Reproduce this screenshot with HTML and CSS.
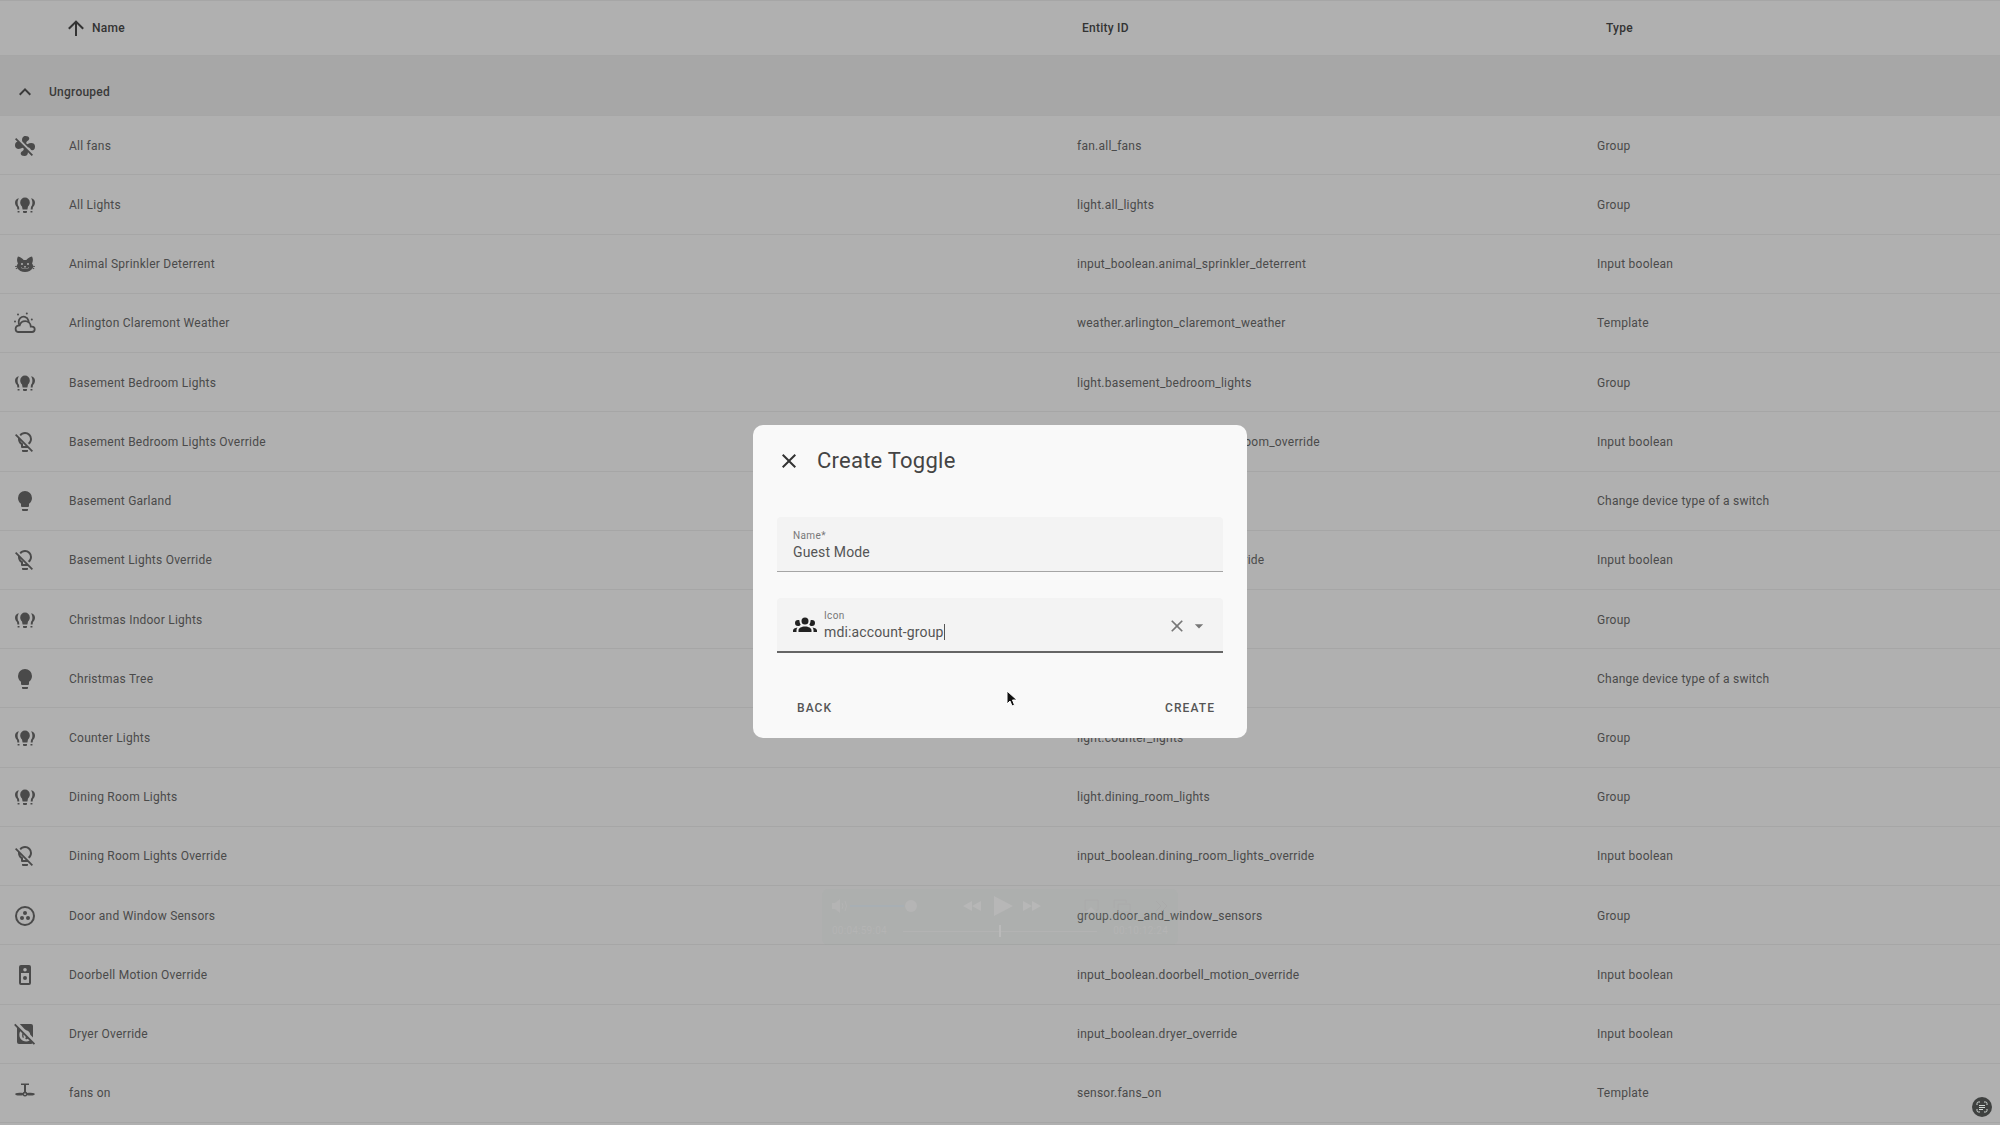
FILE: index.html
```html
<!DOCTYPE html>
<html lang="en">
<head>
<meta charset="utf-8">
<title>Helpers</title>
<link rel="stylesheet" href="styles.css">
</head>
<body>
<svg class="sprite" aria-hidden="true">
  <symbol id="fan-off" viewBox="0 0 24 24"><path d="M12.5,2C9.64,2 8.57,4.55 9.29,7.47L15,13.16C15.87,13.37 16.81,13.81 17.28,14.73C18.46,17.1 22.03,17 22.03,12.5C22.03,8.92 18.05,8.13 14.35,10.13C14.03,9.73 13.61,9.42 13.13,9.22C13.32,8.29 13.76,7.24 14.75,6.75C17.11,5.57 17,2 12.5,2M3.28,4L2,5.27L4.47,7.73C3.22,7.74 2,8.87 2,11.5C2,15.07 5.96,15.85 9.65,13.87C9.97,14.27 10.4,14.59 10.89,14.79C10.69,15.71 10.25,16.75 9.27,17.24C6.91,18.42 7,22 11.5,22C13.8,22 14.94,20.36 14.94,18.21L18.73,22L20,20.72L3.28,4Z"/></symbol>
  <symbol id="bulb-group" viewBox="0 0 24 24"><path d="M12,4.6A4.8,4.8 0 0,0 7.2,9.4C7.2,11.2 8,12.5 9,13.5L9.6,16.6H14.4L15,13.5C16,12.5 16.8,11.2 16.8,9.4A4.8,4.8 0 0,0 12,4.6M10,18V19A1,1 0 0,0 11,20H13A1,1 0 0,0 14,19V18H10M6,5.3C3.5,5.6 2,7.5 2,9.8C2,11.8 3,13 4,14L4.4,16.5H6.3L6,13.8C5,12.8 4.6,11.3 4.6,9.8C4.6,8.2 5,6.8 6,5.3M4.6,18V19.4H6.5V18H4.6M18,5.3C20.5,5.6 22,7.5 22,9.8C22,11.8 21,13 20,14L19.6,16.5H17.7L18,13.8C19,12.8 19.4,11.3 19.4,9.8C19.4,8.2 19,6.8 18,5.3M17.5,18V19.4H19.4V18H17.5Z"/></symbol>
  <symbol id="cat" viewBox="0 0 24 24"><path d="M12,8L10.67,8.09C9.81,7.07 7.4,4.5 5,4.5C5,4.5 3.03,7.46 4.96,11.41C4.41,12.24 4.07,12.67 4,13.66L2.07,13.95L2.28,14.93L4.04,14.67L4.18,15.38L2.61,16.32L3.08,17.21L4.53,16.32C5.68,18.76 8.59,20 12,20C15.41,20 18.32,18.76 19.47,16.32L20.92,17.21L21.39,16.32L19.82,15.38L19.96,14.67L21.72,14.93L21.93,13.95L20,13.66C19.93,12.67 19.59,12.24 19.04,11.41C20.97,7.46 19,4.5 19,4.5C16.6,4.5 14.19,7.07 13.33,8.09L12,8M9,11A1,1 0 0,1 10,12A1,1 0 0,1 9,13A1,1 0 0,1 8,12A1,1 0 0,1 9,11M15,11A1,1 0 0,1 16,12A1,1 0 0,1 15,13A1,1 0 0,1 14,12A1,1 0 0,1 15,11M11,14H13L12.3,15.39C12.5,16.03 13.06,16.5 13.75,16.5A1.5,1.5 0 0,0 15.25,15H15.75A2,2 0 0,1 13.75,17C13,17 12.35,16.59 12,16C11.65,16.59 11,17 10.25,17A2,2 0 0,1 8.25,15H8.75A1.5,1.5 0 0,0 10.25,16.5C10.94,16.5 11.5,16.03 11.7,15.39L11,14Z"/></symbol>
  <symbol id="weather" viewBox="0 0 24 24"><g fill="none" stroke="currentColor" stroke-width="1.8"><path d="M5,21H19A2.7,2.7 0 0,0 19,15.6H17.8C17.6,12.4 15.2,10.2 12.2,10.2C9.6,10.2 7.4,11.8 6.7,14.3C4.3,14.3 2.6,15.8 2.6,17.8C2.6,19.6 3.7,21 5,21Z"/><path d="M6.6,14.3C5.2,12.5 5.4,8.8 7.2,7.1C9.8,4.6 14.4,5.6 15.4,9.4L15.7,11.8"/></g><circle cx="5" cy="3.4" r="1"/><circle cx="13.8" cy="2.6" r="1"/><circle cx="2" cy="10.6" r="1"/><circle cx="18.8" cy="8.6" r="1"/></symbol>
  <symbol id="bulb-off" viewBox="0 0 24 24"><path d="M12,2C9.76,2 7.78,3.05 6.5,4.68L7.93,6.11C8.84,4.84 10.32,4 12,4A5,5 0 0,1 17,9C17,10.68 16.16,12.16 14.89,13.06L16.31,14.5C17.95,13.22 19,11.24 19,9A7,7 0 0,0 12,2M3.28,4L2,5.27L5.04,8.3C5,8.53 5,8.76 5,9C5,11.38 6.19,13.47 8,14.74V17A1,1 0 0,0 9,18H14.73L18.73,22L20,20.72L3.28,4M7.23,10.5L12.73,16H10V13.58C8.68,13 7.66,11.88 7.23,10.5M9,20V21A1,1 0 0,0 10,22H14A1,1 0 0,0 15,21V20H9Z"/></symbol>
  <symbol id="bulb" viewBox="0 0 24 24"><path d="M12,2A7,7 0 0,0 5,9C5,11.38 6.19,13.47 8,14.74V17A1,1 0 0,0 9,18H15A1,1 0 0,0 16,17V14.74C17.81,13.47 19,11.38 19,9A7,7 0 0,0 12,2M9,21A1,1 0 0,0 10,22H14A1,1 0 0,0 15,21V20H9V21Z"/></symbol>
  <symbol id="circles" viewBox="0 0 24 24"><circle cx="12" cy="12" r="9" fill="none" stroke="currentColor" stroke-width="2"/><circle cx="12" cy="9" r="2"/><circle cx="9" cy="14" r="2"/><circle cx="15" cy="14" r="2"/></symbol>
  <symbol id="doorbell" viewBox="0 0 24 24"><path fill-rule="evenodd" d="M8,2A2,2 0 0,0 6,4V20A2,2 0 0,0 8,22H16A2,2 0 0,0 18,20V4A2,2 0 0,0 16,2H8M12,5A1.8,1.8 0 0,1 13.8,6.8A1.8,1.8 0 0,1 12,8.6A1.8,1.8 0 0,1 10.2,6.8A1.8,1.8 0 0,1 12,5M8,10H16V20H8V10M12,13A2,2 0 0,0 10,15A2,2 0 0,0 12,17A2,2 0 0,0 14,15A2,2 0 0,0 12,13Z"/></symbol>
  <symbol id="dryer-off" viewBox="0 0 24 24"><path fill-rule="evenodd" d="M6.8,2H18A2,2 0 0,1 20,4V15.4L17.3,12.7A5.6,5.6 0 0,0 13.2,8.3L11.5,6.9L6.8,2M1.1,3L2.4,1.7L22.1,21.5L20.8,22.8L19.6,21.6C19.2,21.9 18.6,22 18,22H6A2,2 0 0,1 4,20V6L1.1,3M7.3,9.2C6,11 6,14.5 7.4,16.6C9.5,19.8 14,20.4 16.6,18.6L14.7,16.7C14,17.3 13,17.4 12.1,17.1C13,16 12.9,15.4 12.3,14.3L10.5,12.5C10.2,14.4 11.4,15 10.2,16.3C9,15 9,14 9.3,11.3L7.3,9.2Z"/></symbol>
  <symbol id="ceiling-fan" viewBox="0 0 24 24"><path fill-rule="evenodd" d="M8,2.5H16V4H13V10.7C13.6,11 14.1,11.6 14.4,12.1C16,11.6 19.3,11.5 21.2,12.3C21.9,12.7 21.9,13.7 21.2,14C19.3,14.8 16,14.7 14.2,14.2A2.5,2.5 0 0,1 9.8,14.2C8,14.7 4.7,14.8 2.8,14C2.1,13.7 2.1,12.7 2.8,12.3C4.7,11.5 8,11.6 9.6,12.1C9.9,11.6 10.4,11 11,10.7V4H8V2.5M12,12.3A0.9,0.9 0 0,0 11.1,13.2A0.9,0.9 0 0,0 12,14.1A0.9,0.9 0 0,0 12.9,13.2A0.9,0.9 0 0,0 12,12.3Z"/></symbol>
  <symbol id="people" viewBox="0 0 24 24"><path d="M12,5.5A3.5,3.5 0 0,1 15.5,9A3.5,3.5 0 0,1 12,12.5A3.5,3.5 0 0,1 8.5,9A3.5,3.5 0 0,1 12,5.5M5,8C5.56,8 6.08,8.15 6.53,8.42C6.38,9.85 6.8,11.27 7.66,12.38C7.16,13.34 6.16,14 5,14A3,3 0 0,1 2,11A3,3 0 0,1 5,8M19,8A3,3 0 0,1 22,11A3,3 0 0,1 19,14C17.84,14 16.84,13.34 16.34,12.38C17.2,11.27 17.62,9.85 17.47,8.42C17.92,8.15 18.44,8 19,8M5.5,18.25C5.5,16.18 8.41,14.5 12,14.5C15.59,14.5 18.5,16.18 18.5,18.25V20H5.5V18.25M0,20V18.5C0,17.11 1.89,15.94 4.45,15.6C3.86,16.28 3.5,17.22 3.5,18.25V20H0M24,20H20.5V18.25C20.5,17.22 20.14,16.28 19.55,15.6C22.11,15.94 24,17.11 24,18.5V20Z"/></symbol>
  <symbol id="arrow-up" viewBox="0 0 24 24"><path d="M13,20H11V8L5.5,13.5L4.08,12.08L12,4.16L19.92,12.08L18.5,13.5L13,8V20Z"/></symbol>
  <symbol id="chevron-up" viewBox="0 0 24 24"><path d="M7.41,15.41L12,10.83L16.59,15.41L18,14L12,8L6,14L7.41,15.41Z"/></symbol>
  <symbol id="close" viewBox="0 0 24 24"><path d="M19,6.41L17.59,5L12,10.59L6.41,5L5,6.41L10.59,12L5,17.59L6.41,19L12,13.41L17.59,19L19,17.59L13.41,12L19,6.41Z"/></symbol>
  <symbol id="menu-down" viewBox="0 0 24 24"><path d="M7,10L12,15L17,10H7Z"/></symbol>
</svg>

<table class="entities">
  <colgroup><col class="col-icon"><col><col class="col-entity"><col class="col-type"></colgroup>
  <thead>
    <tr class="head"><th></th><th class="name"><span class="sort"><svg class="icon"><use href="#arrow-up"/></svg>Name</span></th><th class="entity">Entity ID</th><th class="type">Type</th></tr>
  </thead>
  <tbody>
    <tr class="group"><th colspan="4"><button class="group-toggle" type="button"><svg class="icon"><use href="#chevron-up"/></svg>Ungrouped</button></th></tr>
    <tr><td><svg class="icon"><use href="#fan-off"/></svg></td><td>All fans</td><td>fan.all_fans</td><td>Group</td></tr>
    <tr><td><svg class="icon"><use href="#bulb-group"/></svg></td><td>All Lights</td><td>light.all_lights</td><td>Group</td></tr>
    <tr><td><svg class="icon"><use href="#cat"/></svg></td><td>Animal Sprinkler Deterrent</td><td>input_boolean.animal_sprinkler_deterrent</td><td>Input boolean</td></tr>
    <tr><td><svg class="icon"><use href="#weather"/></svg></td><td>Arlington Claremont Weather</td><td>weather.arlington_claremont_weather</td><td>Template</td></tr>
    <tr><td><svg class="icon"><use href="#bulb-group"/></svg></td><td>Basement Bedroom Lights</td><td>light.basement_bedroom_lights</td><td>Group</td></tr>
    <tr><td><svg class="icon"><use href="#bulb-off"/></svg></td><td>Basement Bedroom Lights Override</td><td>input_boolean.basement_bedroom_override</td><td>Input boolean</td></tr>
    <tr><td><svg class="icon"><use href="#bulb"/></svg></td><td>Basement Garland</td><td>light.basement_garland</td><td>Change device type of a switch</td></tr>
    <tr><td><svg class="icon"><use href="#bulb-off"/></svg></td><td>Basement Lights Override</td><td>input_boolean.basement_override</td><td>Input boolean</td></tr>
    <tr><td><svg class="icon"><use href="#bulb-group"/></svg></td><td>Christmas Indoor Lights</td><td>light.christmas_lights</td><td>Group</td></tr>
    <tr><td><svg class="icon"><use href="#bulb"/></svg></td><td>Christmas Tree</td><td>light.christmas_tree</td><td>Change device type of a switch</td></tr>
    <tr><td><svg class="icon"><use href="#bulb-group"/></svg></td><td>Counter Lights</td><td>light.counter_lights</td><td>Group</td></tr>
    <tr><td><svg class="icon"><use href="#bulb-group"/></svg></td><td>Dining Room Lights</td><td>light.dining_room_lights</td><td>Group</td></tr>
    <tr><td><svg class="icon"><use href="#bulb-off"/></svg></td><td>Dining Room Lights Override</td><td>input_boolean.dining_room_lights_override</td><td>Input boolean</td></tr>
    <tr><td><svg class="icon"><use href="#circles"/></svg></td><td>Door and Window Sensors</td><td>group.door_and_window_sensors</td><td>Group</td></tr>
    <tr><td><svg class="icon"><use href="#doorbell"/></svg></td><td>Doorbell Motion Override</td><td>input_boolean.doorbell_motion_override</td><td>Input boolean</td></tr>
    <tr><td><svg class="icon"><use href="#dryer-off"/></svg></td><td>Dryer Override</td><td>input_boolean.dryer_override</td><td>Input boolean</td></tr>
    <tr><td><svg class="icon"><use href="#ceiling-fan"/></svg></td><td>fans on</td><td>sensor.fans_on</td><td>Template</td></tr>
  </tbody>
</table>

<!-- Faded video player controls floating over the page -->
<div class="player">
  <div class="player-row">
    <svg class="player-volume" viewBox="0 0 88 20"><path d="M0 7h3l5-4v14l-5-4H0z" fill="#b4b4b4"/><path d="M10 7q2 3 0 6M13 5q3 5 0 10" fill="none" stroke="#b4b4b4"/><path d="M18 10h54" stroke="#a8afb4" stroke-width="2"/><circle cx="79" cy="10" r="6" fill="#b5b5b5"/></svg>
    <svg class="player-transport" viewBox="0 0 80 22"><path d="M10 6v10L1 11zM19 6v10l-9-5zM32 1v20l19-10zM61 6v10l9-5zM70 6v10l9-5z" fill="#b7b7b7"/></svg>
    <svg class="player-extra" viewBox="0 0 84 20"><g fill="none" stroke="#aaa"><path d="M3 14H1V4h13v10h-2M30 12V4h12v3M34 8h12v8H34zM72 5l5 5-5 5M78 5l5 5-5 5"/></g><path d="M7 11l5 5H2z" fill="#b3b3b3"/></svg>
  </div>
  <div class="player-row player-times"><span>00:04:59:04</span><span class="player-track"><span class="player-mark"></span></span><span>00:10:12:24</span></div>
</div>

<main class="overlay">
  <form class="dialog" role="dialog" aria-labelledby="dialog-title">
    <header class="dialog-head">
      <button class="icon-button" type="button" aria-label="Close"><svg class="icon"><use href="#close"/></svg></button>
      <h1 id="dialog-title">Create Toggle</h1>
    </header>
    <div class="field">
      <div class="field-text">
        <label for="name">Name*</label>
        <input id="name" type="text" value="Guest Mode">
      </div>
    </div>
    <div class="field field-focused">
      <svg class="icon field-icon"><use href="#people"/></svg>
      <div class="field-text">
        <label for="icon">Icon</label>
        <div class="value-line"><input id="icon" class="value-fit" type="text" value="mdi:account-group"><span class="caret"></span></div>
      </div>
      <div class="field-tools">
        <button class="icon-button" type="button" aria-label="Clear"><svg class="icon"><use href="#close"/></svg></button>
        <button class="icon-button" type="button" aria-label="Open list"><svg class="icon"><use href="#menu-down"/></svg></button>
      </div>
    </div>
    <footer class="actions">
      <button class="action" type="button">BACK</button>
      <button class="action" type="button">CREATE</button>
    </footer>
  </form>
</main>

<svg class="pointer" viewBox="0 0 14 18"><path d="M2 1v13l3-3 2 5 2.500-1-2-5H12z" fill="#111" stroke="#fff" stroke-width="1"/></svg>

<button class="scan" type="button" aria-label="Scan text"><svg viewBox="0 0 20 20"><path d="M5 8V6.500a1.500 1.500 0 0 1 1.500-1.500H8M12 5h1.500A1.500 1.500 0 0 1 15 6.500V8M15 12v1.500a1.500 1.500 0 0 1-1.500 1.500H12M8 15H6.500A1.500 1.500 0 0 1 5 13.500V12M7 8.500h6M7 10.500h6M7 12.500h4"/></svg></button>
</body>
</html>
```
FILE: styles.css
```css
* { box-sizing: border-box; }

body {
  margin: 0;
  background: #b0b0b0;
  color: #4a4a4a;
  font: 12px/20px Roboto, "Liberation Sans", sans-serif;
  letter-spacing: 0.02em;
  overflow: hidden;
}

button, input {
  font: inherit;
  letter-spacing: inherit;
  color: inherit;
  background: none;
  border: 0;
  padding: 0;
  margin: 0;
}

.sprite { position: absolute; width: 0; height: 0; }
.icon { display: block; flex: none; width: 24px; height: 24px; fill: currentColor; }

/* Entity table */
.entities {
  width: 100%;
  height: calc(100vh - 2px);
  table-layout: fixed;
  border-collapse: collapse;
  border-top: 1px solid #a6a6a6;
}
.col-icon { width: 52px; }
.col-entity { width: 26%; }
.col-type { width: 21%; }
.entities tr { height: 59px; }
.entities td, .entities th {
  padding: 1px 17px 0;
  border-bottom: 1px solid #a6a6a6;
  text-align: left;
  white-space: nowrap;
}
.entities td:first-child { padding: 1px 13px 0; }
.entities .head { height: 55px; color: #333; }
.entities th { font-weight: 500; }
.entities .head th { padding-top: 0; }
.entities .head .name { padding-left: 12px; }
.entities .head .entity { padding-left: 22px; }
.entities .head .type { padding-left: 26px; }
.sort { display: flex; align-items: center; gap: 4px; }
.entities .group { height: 60px; background: #a7a7a7; color: #3a3a3a; }
.entities .group th { padding: 13px 13px 0; }
.group-toggle { display: flex; align-items: center; gap: 12px; font-weight: 500; }

/* Video player controls */
.player {
  position: absolute;
  left: calc(50% - 178px);
  top: 889px;
  width: 356px;
  padding: 6px 10px 0;
  border-radius: 6px;
  background: rgba(160, 170, 165, 0.12);
  color: #b4b4b4;
}
.player-row { display: flex; align-items: center; justify-content: space-between; height: 22px; }
.player-times { height: 28px; gap: 16px; font-size: 10px; }
.player-volume { width: 88px; height: 20px; }
.player-transport { width: 80px; height: 22px; }
.player-extra { width: 84px; height: 20px; }
.player-track { display: flex; flex: 1; align-items: center; justify-content: center; height: 1px; background: #b3b3b3; }
.player-mark { flex: none; width: 2px; height: 12px; background: #bababa; }

/* Dialog */
.overlay {
  position: fixed;
  inset: 0;
  display: flex;
  align-items: center;
  justify-content: center;
  padding-top: 37px;
}
.dialog {
  width: 494px;
  padding: 14px 24px 18px;
  border-radius: 10px;
  background: #f9f9f9;
}
.dialog-head { display: flex; align-items: center; gap: 16px; height: 44px; margin-bottom: 34px; }
.dialog-head h1 {
  margin: 0;
  font-size: 22px;
  font-weight: 400;
  line-height: 32px;
  color: #444;
}
.icon-button { display: block; cursor: pointer; color: #333; }
.field {
  display: flex;
  align-items: center;
  height: 55px;
  padding: 0 14px 0 16px;
  margin-bottom: 26px;
  border-radius: 4px 4px 0 0;
  border-bottom: 1px solid #a5a5a5;
  background: #f3f3f3;
}
.field-focused { border-bottom: 2px solid #666; }
.field-icon { color: #222; margin-right: 7px; }
.field-text { display: flex; flex-direction: column; flex: 1; padding-top: 4px; }
.field-text label { font-size: 10px; line-height: 12px; letter-spacing: 0.04em; color: #777; }
.field-text input { height: 20px; font-size: 14px; letter-spacing: 0.01em; color: #555; outline: 0; }
.value-line { display: flex; align-items: center; }
.value-fit { field-sizing: content; }
.caret { width: 1px; height: 16px; background: #555; }
.field-tools { display: flex; gap: 2px; padding-top: 4px; }
.field-tools .icon-button { color: #777; }
.field-tools .icon { width: 20px; height: 20px; }
.actions { display: flex; justify-content: space-between; padding: 17px 8px 0 20px; }
.action { font-weight: 500; line-height: 24px; letter-spacing: 0.09em; color: #555; }

.pointer { position: absolute; left: 1005px; top: 690px; width: 14px; height: 18px; }

.scan {
  position: fixed;
  right: 8px;
  bottom: 8px;
  width: 20px;
  height: 20px;
  border-radius: 50%;
  background: #3f4140;
}
.scan svg { display: block; width: 20px; height: 20px; fill: none; stroke: #d0d6d3; }
```
